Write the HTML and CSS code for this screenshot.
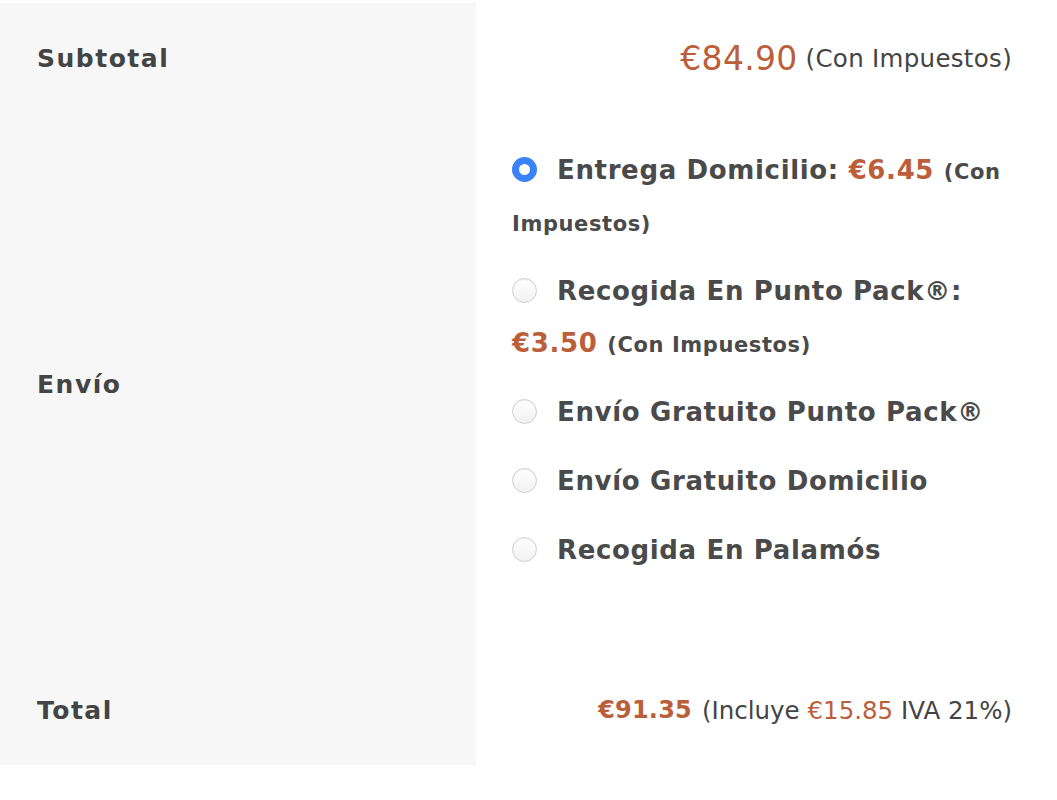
FILE: index.html
```html
<!DOCTYPE html>
<html lang="es">
<head>
<meta charset="utf-8">
<title>Totales</title>
<link rel="stylesheet" href="styles.css">
</head>
<body>
<div class="totals">
  <div class="label row-sub">Subtotal</div>
  <div class="value row-sub"><span class="price">€84.90</span> <span class="tax">(Con Impuestos)</span></div>

  <div class="label row-ship">Envío</div>
  <div class="value ship-cell">
    <ul class="methods">
      <li class="method">
        <span class="radio checked"></span><span class="mname">Entrega Domicilio: <span class="price bold">€6.45</span> <small class="tax-b">(Con Impuestos)</small></span>
      </li>
      <li class="method">
        <span class="radio"></span><span class="mname">Recogida En Punto Pack®: <span class="price bold">€3.50</span> <small class="tax-b">(Con Impuestos)</small></span>
      </li>
      <li class="method">
        <span class="radio"></span><span class="mname">Envío Gratuito Punto Pack®</span>
      </li>
      <li class="method">
        <span class="radio"></span><span class="mname">Envío Gratuito Domicilio</span>
      </li>
      <li class="method">
        <span class="radio"></span><span class="mname">Recogida En Palamós</span>
      </li>
    </ul>
  </div>

  <div class="label row-total">Total</div>
  <div class="value row-total"><span class="price bold">€91.35</span> <span class="tax tax-total">(Incluye <span class="price">€15.85</span> IVA 21%)</span></div>
</div>
</body>
</html>
```

FILE: styles.css
```css
html, body {
  margin: 0;
  padding: 0;
  background: #ffffff;
}
body {
  padding-top: 3px;
  font-family: "DejaVu Sans", "Open Sans", sans-serif;
  color: #484848;
}
.totals {
  display: grid;
  grid-template-columns: 476px 1fr;
  grid-template-rows: 110px 542px 110px;
}
.label {
  background: #f7f7f7;
  display: flex;
  align-items: center;
  padding-left: 37px;
  font-size: 25px;
  font-weight: 600;
  letter-spacing: 1.5px;
  color: #444444;
}
.value {
  display: flex;
  align-items: center;
  justify-content: flex-end;
  padding-right: 45px;
  white-space: nowrap;
}
.price {
  color: #bb5e3a;
  font-size: 33px;
  letter-spacing: 0.3px;
}
.price.bold {
  font-weight: 700;
  font-size: 24px;
  letter-spacing: 0.2px;
}
.tax {
  font-size: 24.5px;
  letter-spacing: 0.3px;
  color: #444444;
  margin-left: 8px;
}
.tax .price {
  font-size: 24.5px;
  letter-spacing: 0;
}
.tax-total {
  letter-spacing: 0;
  margin-left: 10px;
}
.ship-cell {
  justify-content: flex-start;
  align-items: flex-start;
  padding: 31px 45px 0 36px;
  white-space: normal;
}
.methods {
  list-style: none;
  margin: 0;
  padding: 0;
}
.method {
  font-size: 26px;
  font-weight: 700;
  line-height: 52px;
  letter-spacing: 0.65px;
  margin-bottom: 17px;
  color: #4a4a4a;
}
.method .price.bold {
  font-size: 26px;
  letter-spacing: 0.65px;
}
.tax-b {
  font-size: 21px;
  line-height: 1;
  letter-spacing: 0.6px;
  font-weight: 700;
  color: #4a4a4a;
}
.radio {
  display: inline-block;
  width: 25px;
  height: 25px;
  box-sizing: border-box;
  border-radius: 50%;
  border: 1px solid #cfcfcf;
  background: linear-gradient(#ffffff, #f1f1f1);
  vertical-align: -3px;
  margin-right: 20px;
  box-shadow: inset 0 1px 1px rgba(0,0,0,0.06);
}
.radio.checked {
  border: 7px solid #3a82f7;
  background: #ffffff;
  box-shadow: none;
}
```
